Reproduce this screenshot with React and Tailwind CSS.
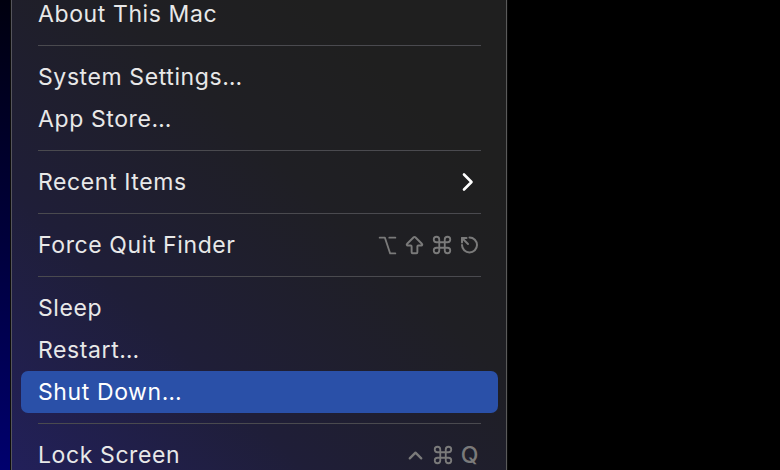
import React from 'react'
import { Command, ArrowBigUp, ChevronUp, Option } from 'lucide-react'

const Sep = () => (
  <div className="py-[10px] px-[17px]">
    <div className="h-px bg-[#4a4a4f]" />
  </div>
)

const EscIcon = () => (
  <svg width="22" height="22" viewBox="0 0 22 22" fill="none" stroke="currentColor" strokeWidth="2" strokeLinecap="round" strokeLinejoin="round">
    <path d="M11.5 3.5 A7.5 7.5 0 1 1 4 11" />
    <path d="M10 10 L4 4" />
    <path d="M4 4 H8.5 M4 4 V8.5" />
  </svg>
)

const Chevron = () => (
  <svg width="14" height="20" viewBox="0 0 14 20" fill="none" stroke="white" strokeWidth="2.6" strokeLinecap="round" strokeLinejoin="round" className="mr-[5px]">
    <path d="M3 2.5 L10.5 10 L3 17.5" />
  </svg>
)

const Row = ({ label, active, right }) => (
  <div
    className={
      'h-[42px] flex items-center justify-between pl-[17px] pr-[18px] rounded-[7px] ' +
      (active ? 'bg-[#2a50a8] text-white' : 'text-[#e8e8e8]')
    }
  >
    <span className="text-[23px] tracking-[0.6px]">{label}</span>
    {right}
  </div>
)

const Keys = ({ children }) => (
  <div className="flex items-center gap-[5px] text-[#7a7a7a]">{children}</div>
)

export default function App() {
  return (
    <div
      className="w-[780px] h-[470px] flex overflow-hidden bg-black"
      style={{ fontFamily: 'Inter, "Open Sans", sans-serif' }}
    >
      {/* wallpaper peeking through */}
      <div className="w-[10px] h-full bg-[linear-gradient(to_bottom,#00000f,#00003a_50%,#00006e)]" />

      {/* menu */}
      <div className="w-[498px] h-full border-x border-[#0b0b0b] shadow-[inset_1px_0_0_#55555c,inset_-1px_0_0_#5a5a5a] bg-[linear-gradient(to_top_right,#22205a_0%,#1f1e38_30%,#1f1f24_60%,#1f1f1f_80%)] pl-[10px] pr-[9px] overflow-hidden">
        <div className="-mt-[7px]">
          <Row label="About This Mac" />
          <Sep />
          <Row label="System Settings…" />
          <Row label="App Store…" />
          <Sep />
          <Row label="Recent Items" right={<Chevron />} />
          <Sep />
          <Row
            label="Force Quit Finder"
            right={
              <Keys>
                <Option size={21} strokeWidth={2} />
                <ArrowBigUp size={23} strokeWidth={2} />
                <Command size={22} strokeWidth={2} />
                <EscIcon />
              </Keys>
            }
          />
          <Sep />
          <Row label="Sleep" />
          <Row label="Restart…" />
          <Row label="Shut Down…" active />
          <Sep />
          <Row
            label="Lock Screen"
            right={
              <Keys>
                <ChevronUp size={23} strokeWidth={2.4} />
                <Command size={22} strokeWidth={2} />
                <span className="text-[23px] font-medium leading-none w-[21px] text-center">Q</span>
              </Keys>
            }
          />
        </div>
      </div>

      <div className="flex-1 h-full bg-black" />
    </div>
  )
}
